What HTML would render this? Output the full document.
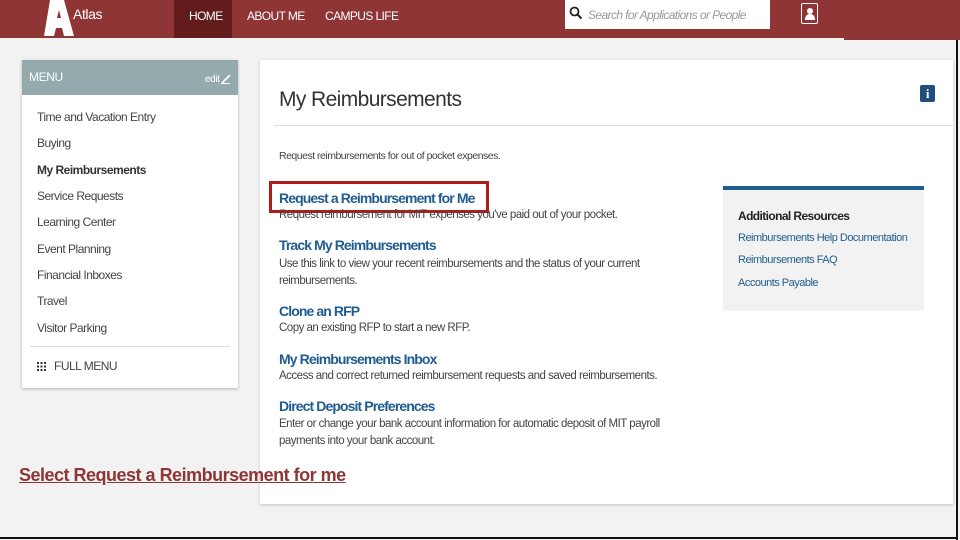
<!DOCTYPE html>
<html><head><meta charset="utf-8"><style>
*{margin:0;padding:0;box-sizing:border-box}
body{width:960px;height:540px;overflow:hidden;background:#f2f2f2;font-family:"Liberation Sans",sans-serif;position:relative;letter-spacing:-0.4px}
.a{position:absolute;white-space:nowrap}
.hd{position:absolute;left:0;top:0;width:844px;height:38px;background:#8f3535}
.hd2{position:absolute;left:844px;top:0;width:116px;height:40px;background:#8f3535}
.nav{color:#fff;font-size:12px;top:9px;letter-spacing:-0.6px}
.menu{position:absolute;left:22px;top:60px;width:216px;height:328px;background:#fff;box-shadow:0 1px 3px rgba(0,0,0,.25)}
.mh{position:absolute;left:0;top:0;width:216px;height:35px;background:#95aaac}
.mi{font-size:12px;color:#444;left:15px;letter-spacing:-0.5px}
.main{position:absolute;left:260px;top:60px;width:693px;height:444px;background:#fff;box-shadow:0 1px 3px rgba(0,0,0,.2)}
.lk{font-size:14px;color:#1f5c8f;font-weight:bold;left:19px;letter-spacing:-0.9px}
.ds{font-size:11.5px;color:#444;left:19px;letter-spacing:-0.5px}
.rs{font-size:11px;color:#1f5c8f;left:478px;letter-spacing:-0.5px}
</style></head><body>
<div class="hd"></div><div class="hd2"></div>
<div class="a" style="left:44px;top:0;width:30px;height:36px">
<svg width="30" height="36" viewBox="0 0 30 36"><polygon points="6,0 20,0 30,36 20,36 18,28 12,28 10,36 0,36" fill="#fff"/><polygon points="13,18 17,18 15,10" fill="#8f3535"/></svg></div>
<div class="a" style="left:73px;top:6px;color:#fff;font-size:14px">Atlas</div>
<div class="a" style="left:174px;top:0;width:58px;height:38px;background:#621c1c"></div>
<div class="a nav" style="left:189px">HOME</div>
<div class="a nav" style="left:247px">ABOUT ME</div>
<div class="a nav" style="left:325px">CAMPUS LIFE</div>
<div class="a" style="left:565px;top:0;width:205px;height:29px;background:#fff"></div>
<svg class="a" style="left:569px;top:6px" width="14" height="14" viewBox="0 0 14 14"><circle cx="5.5" cy="5.5" r="4" fill="none" stroke="#222" stroke-width="1.8"/><line x1="8.5" y1="8.5" x2="12.5" y2="12.5" stroke="#222" stroke-width="2"/></svg>
<div class="a" style="left:588px;top:8px;font-size:12px;color:#999;font-style:italic;letter-spacing:-0.6px">Search for Applications or People</div>
<div class="a" style="left:801px;top:3px;width:17px;height:21px;border:1.5px solid #fff;border-radius:2px"></div>
<svg class="a" style="left:804px;top:7px" width="12" height="14" viewBox="0 0 12 14"><circle cx="6" cy="4" r="3" fill="#fff"/><path d="M1 13 Q1 7 6 7 Q11 7 11 13Z" fill="#fff"/></svg>
<div class="a" style="left:956px;top:40px;width:2px;height:500px;background:#111"></div>
<div class="a" style="left:0;top:537px;width:958px;height:2px;background:#111"></div>

<div class="menu"><div class="mh"></div>
<div class="a" style="left:7px;top:10px;color:#fff;font-size:12px">MENU</div>
<div class="a" style="left:183px;top:14px;color:#fff;font-size:10px">edit</div>
<svg class="a" style="left:199px;top:14px" width="10" height="10"><line x1="1" y1="9" x2="9" y2="1" stroke="#fff" stroke-width="1.8"/><line x1="0" y1="9.5" x2="9" y2="9.5" stroke="#fff"/></svg>
<div class="a mi" style="top:50px">Time and Vacation Entry</div>
<div class="a mi" style="top:76px">Buying</div>
<div class="a mi" style="top:103px;font-weight:bold;color:#333">My Reimbursements</div>
<div class="a mi" style="top:129px">Service Requests</div>
<div class="a mi" style="top:155px">Learning Center</div>
<div class="a mi" style="top:182px">Event Planning</div>
<div class="a mi" style="top:208px">Financial Inboxes</div>
<div class="a mi" style="top:234px">Travel</div>
<div class="a mi" style="top:261px">Visitor Parking</div>
<div class="a" style="left:8px;top:286px;width:200px;height:1px;background:#ddd"></div>
<svg class="a" style="left:15px;top:302px" width="9" height="9"><g fill="#333"><rect x="0" y="0" width="2" height="2"/><rect x="3.5" y="0" width="2" height="2"/><rect x="7" y="0" width="2" height="2"/><rect x="0" y="3.5" width="2" height="2"/><rect x="3.5" y="3.5" width="2" height="2"/><rect x="7" y="3.5" width="2" height="2"/><rect x="0" y="7" width="2" height="2"/><rect x="3.5" y="7" width="2" height="2"/><rect x="7" y="7" width="2" height="2"/></g></svg>
<div class="a mi" style="left:32px;top:299px">FULL MENU</div>
</div>

<div class="main">
<div class="a" style="left:19px;top:28px;font-size:21px;color:#333;letter-spacing:-0.6px">My Reimbursements</div>
<div class="a" style="left:660px;top:25px;width:15px;height:17px;background:#1f4f7a;border-radius:2px;color:#fff;font-size:13px;font-weight:bold;text-align:center;line-height:17px;font-family:'Liberation Serif',serif">i</div>
<div class="a" style="left:14px;top:65px;width:679px;height:1px;background:#ddd"></div>
<div class="a ds" style="top:90px;font-size:10.5px">Request reimbursements for out of pocket expenses.</div>
<div class="a lk" style="top:130px">Request a Reimbursement for Me</div>
<div class="a" style="left:9px;top:121px;width:220px;height:32px;border:3px solid #b01c1c"></div>
<div class="a ds" style="top:149px">Request reimbursement for MIT expenses you've paid out of your pocket.</div>
<div class="a lk" style="top:177px">Track My Reimbursements</div>
<div class="a ds" style="top:198px">Use this link to view your recent reimbursements and the status of your current</div>
<div class="a ds" style="top:215px">reimbursements.</div>
<div class="a lk" style="top:243px">Clone an RFP</div>
<div class="a ds" style="top:262px">Copy an existing RFP to start a new RFP.</div>
<div class="a lk" style="top:291px">My Reimbursements Inbox</div>
<div class="a ds" style="top:310px">Access and correct returned reimbursement requests and saved reimbursements.</div>
<div class="a lk" style="top:338px">Direct Deposit Preferences</div>
<div class="a ds" style="top:358px">Enter or change your bank account information for automatic deposit of MIT payroll</div>
<div class="a ds" style="top:375px">payments into your bank account.</div>
<div class="a" style="left:463px;top:126px;width:201px;height:125px;background:#f2f2f2;border-top:4px solid #1f5c8f"></div>
<div class="a" style="left:478px;top:149px;font-size:12px;color:#222;font-weight:bold;letter-spacing:-0.6px">Additional Resources</div>
<div class="a rs" style="top:172px">Reimbursements Help Documentation</div>
<div class="a rs" style="top:194px">Reimbursements FAQ</div>
<div class="a rs" style="top:217px">Accounts Payable</div>
</div>
<div class="a" style="left:19px;top:465px;font-size:18px;font-weight:bold;color:#8f3535;text-decoration:underline;letter-spacing:-0.5px">Select Request a Reimbursement for me</div>
</body></html>
